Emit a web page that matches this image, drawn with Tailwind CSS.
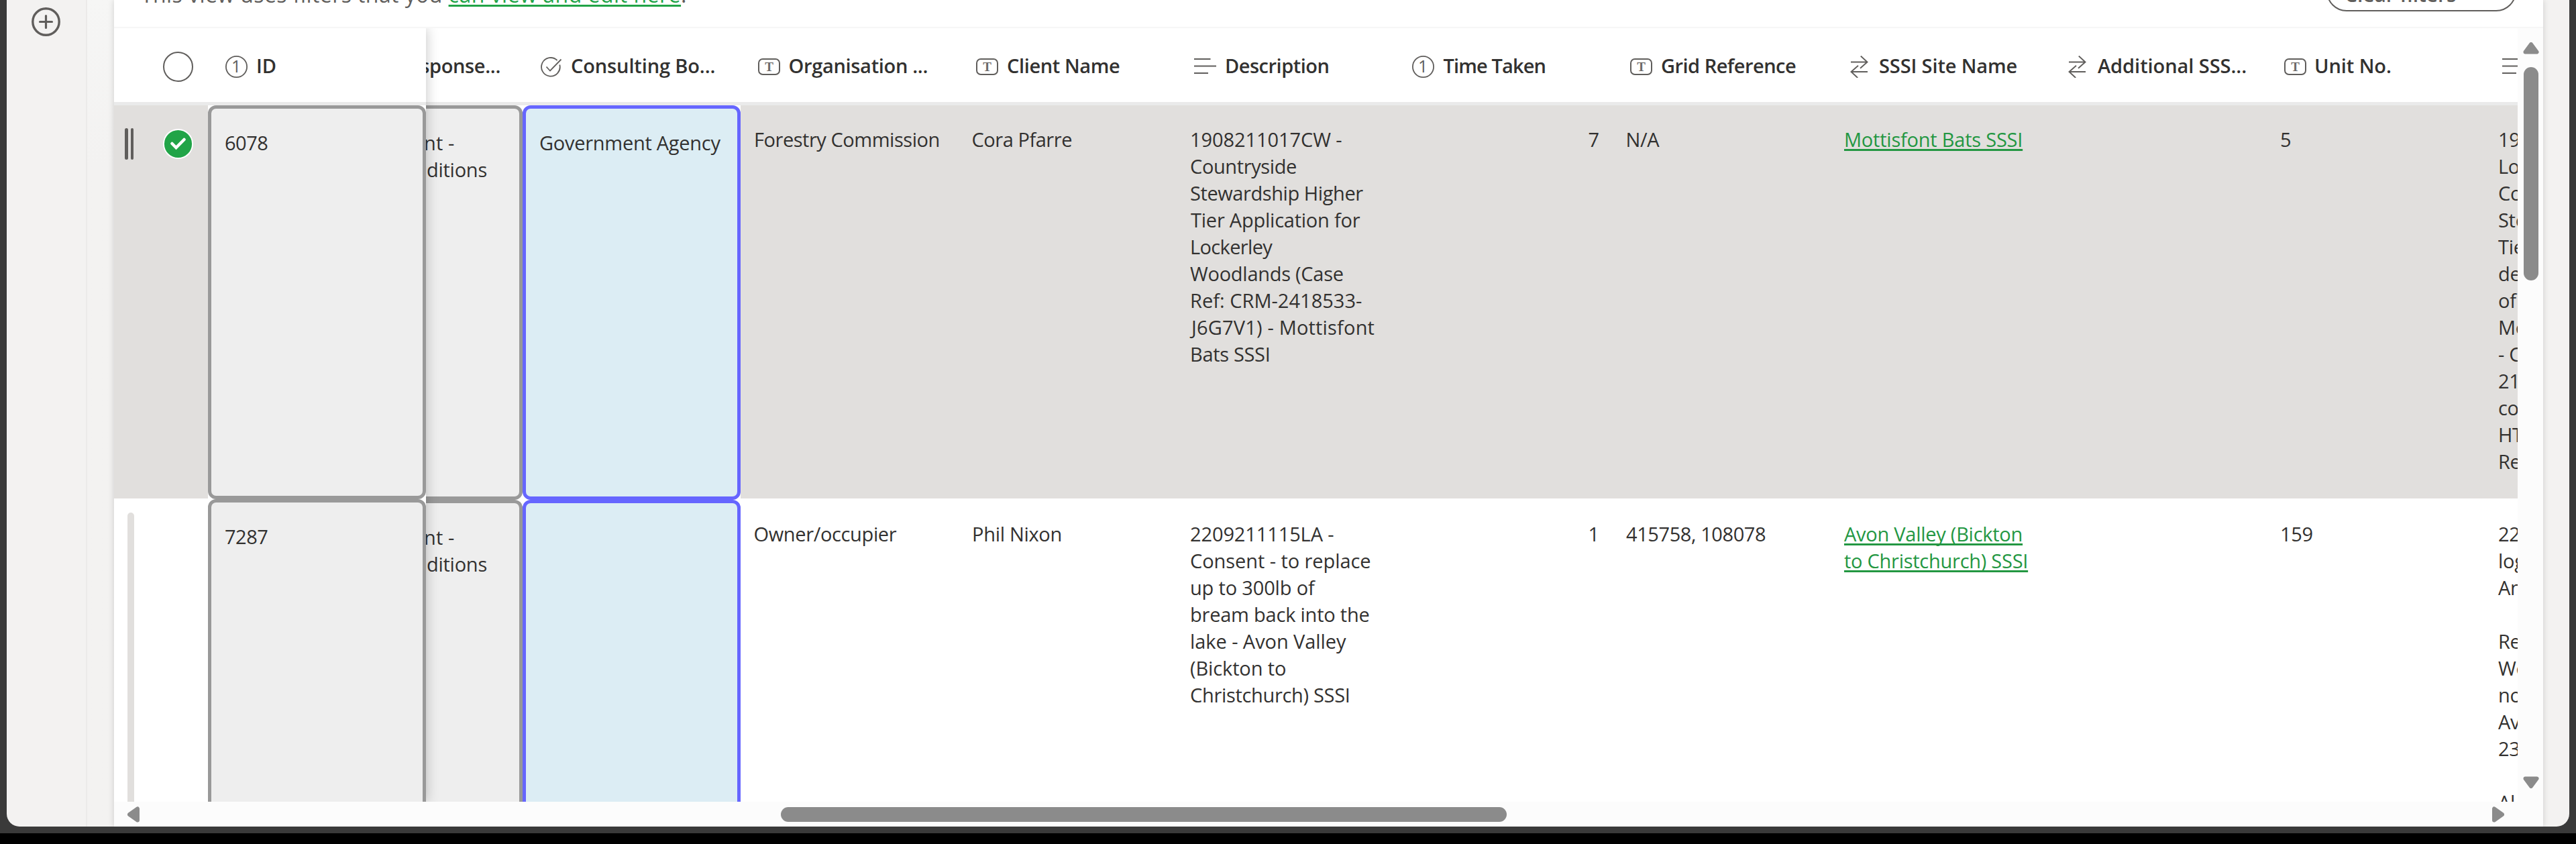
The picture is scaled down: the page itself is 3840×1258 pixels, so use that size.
<!DOCTYPE html>
<html lang="en">
<head>
<meta charset="utf-8">
<title>Consultations</title>
<script src="https://cdn.jsdelivr.net/npm/@tailwindcss/browser@4"></script>
</head>
<body class="h-[1258px] w-[3840px] overflow-hidden bg-black font-['Open_Sans',sans-serif] text-[29px] leading-10 text-[#323130] whitespace-nowrap">
<svg class="hidden">
  <symbol id="num" viewBox="0 0 33 33"><circle cx="16.5" cy="16.5" r="15.6" fill="none" stroke="#605e5c" stroke-width="1.8"/><text x="16.2" y="25.2" text-anchor="middle" font-size="25" font-weight="400" fill="#605e5c" font-family="Open Sans">1</text></symbol>
  <symbol id="txt" viewBox="0 0 33 33"><rect x="1" y="5" width="31" height="23" rx="6" fill="none" stroke="#605e5c" stroke-width="2"/><text x="16.5" y="22.7" text-anchor="middle" font-size="19" font-weight="700" fill="#6b6967" font-family="Liberation Serif">T</text></symbol>
  <symbol id="chk" viewBox="0 0 33 33"><path d="M24.600 7A13.800 13.800 0 1 0 28.300 13.500" fill="none" stroke="#605e5c" stroke-width="1.8"/><path d="M8.500 16.500l5.500 6L30.500 5.500" fill="none" stroke="#605e5c" stroke-width="1.800"/></symbol>
  <symbol id="par" viewBox="0 0 33 33"><path d="M0 5h24.500M0 15.600h33M0 26h21" stroke="#605e5c" stroke-width="2" fill="none"/></symbol>
  <symbol id="lnk" viewBox="0 0 33 33"><path d="M4 9.500h24M18.800 .5l9.700 9-10.500 9.200M29 24h-24M15 14.800L4.500 24l9.700 9" stroke="#605e5c" stroke-width="1.900" fill="none"/></symbol>
</svg>

<div class="flex h-[1242px] w-full flex-col bg-[#3a3a3a] px-[10px]">
 <div class="flex h-[1232px] overflow-hidden rounded-b-[19px] bg-[#f3f2f1]">

  <!-- navigation rail -->
  <nav class="flex w-[120px] shrink-0 flex-col border-r-2 border-[#ebeae9] pt-[11px] pl-[37px]">
    <svg class="h-[44px] w-[44px]" viewBox="0 0 44 44" fill="none" stroke="#605e5c" stroke-linecap="round"><circle cx="21.500" cy="21.500" r="19.700" stroke-width="3.400"/><path d="M21.500 12.500v18M12.500 21.500h18" stroke-width="3.200"/></svg>
  </nav>
  <div class="w-10 shrink-0 bg-linear-to-b from-[#f6f6f5] to-[#f3f2f1] to-20%"></div>

  <main class="flex w-[3621px] shrink-0 flex-col bg-white shadow-[0_0_9px_rgba(0,0,0,0.16)]">
    <!-- filter notice -->
    <div class="flex h-[42px] shrink-0 items-start justify-between overflow-hidden border-b-2 border-[#f6f6f6] pr-[40px] pl-[40px] text-[#605e5c]">
      <p class="-mt-[28px] text-[32px] leading-10 tracking-[0.42px]">This view uses filters that you <a class="tracking-[0.5px] text-[#21a447] underline decoration-[3px] underline-offset-[3px] [text-decoration-skip-ink:none]">can view and edit here</a>.</p>
      <div class="-mt-[43px] flex h-[60px] w-[283px] shrink-0 items-center rounded-[30px] border-2 border-[#605e5c] pl-[25px] text-[30px] font-semibold"><span class="mt-[10px] tracking-[-0.05px]">Clear filters</span></div>
    </div>

    <div class="flex h-[1153px] shrink-0">
     <div class="relative flex w-[3583px] shrink-0 overflow-hidden">

      <!-- frozen columns -->
      <div class="z-10 w-[465px] shrink-0 shadow-[0_0_18px_rgba(0,0,0,0.24)]">
        <div class="flex h-[115px] items-center border-b-[5px] border-[#eaeaea] bg-white pt-0.5 font-semibold">
          <span class="mt-[3px] ml-[73px] h-[45px] w-[45px] rounded-full border-2 border-[#605e5c]"></span>
          <svg class="mt-[3px] ml-[48px] h-[33px] w-[33px]"><use href="#num"/></svg>
          <span class="ml-[13px]">ID</span>
        </div>
        <div class="flex h-[587px] bg-white">
          <div class="flex h-[586px] w-[140px] items-start bg-[#e1dfdd]">
            <div class="mt-[34px] ml-4 flex h-[47px] gap-[4px]"><i class="w-[4.5px] rounded-full bg-[#605e5c]"></i><i class="w-[4.5px] rounded-full bg-[#605e5c]"></i></div>
            <svg class="mt-[35px] ml-[44px] h-[45px] w-[45px]" viewBox="0 0 45 45"><circle cx="22.500" cy="22.500" r="22.500" fill="#fff"/><circle cx="22.500" cy="22.500" r="20.600" fill="#21a447"/><path d="M13.500 22l6 6L31.500 16" fill="none" stroke="#fff" stroke-width="4.500" stroke-linecap="round"/></svg>
          </div>
          <div class="w-[325px] rounded-xl border-[5px] border-[#999] bg-[#eee] pt-[31px] pl-5 tracking-[-0.5px]">6078</div>
        </div>
        <div class="flex h-[600px] bg-white">
          <div class="w-[140px] pt-5"><div class="ml-5 h-full w-[10px] rounded-full bg-[#e1dfdd]"></div></div>
          <div class="w-[325px] rounded-xl border-[5px] border-[#999] bg-[#eee] pt-[31px] pl-5 tracking-[-0.5px]">7287</div>
        </div>
      </div>

      <!-- scrolling columns -->
      <div class="w-[3118px] shrink-0">
        <div class="flex h-[115px] border-b-[5px] border-[#eaeaea] bg-white pt-0.5 font-semibold">
          <div class="flex w-[144px] shrink-0 items-center justify-end overflow-hidden pr-[33px] tracking-[-0.35px]">sponse...</div>
          <div class="flex w-[325px] shrink-0 items-center pl-[27px]"><svg class="mt-[3px] h-[33px] w-[33px]"><use href="#chk"/></svg><span class="ml-[12px] tracking-[-0.13px]">Consulting Bo...</span></div>
          <div class="flex w-[325px] shrink-0 items-center pl-[26px]"><svg class="mt-[3px] h-[33px] w-[33px]"><use href="#txt"/></svg><span class="ml-[12.500px] tracking-[-0.32px]">Organisation ...</span></div>
          <div class="flex w-[325px] shrink-0 items-center pl-[26px]"><svg class="mt-[3px] h-[33px] w-[33px]"><use href="#txt"/></svg><span class="ml-[13px] tracking-[-0.39px]">Client Name</span></div>
          <div class="flex w-[325px] shrink-0 items-center pl-[26px]"><svg class="mt-[3px] h-[33px] w-[33px]"><use href="#par"/></svg><span class="ml-[13px] tracking-[-0.49px]">Description</span></div>
          <div class="flex w-[325px] shrink-0 items-center pl-[26px]"><svg class="mt-[3px] h-[33px] w-[33px]"><use href="#num"/></svg><span class="ml-[13.500px] tracking-[-0.88px]">Time Taken</span></div>
          <div class="flex w-[325px] shrink-0 items-center pl-[26px]"><svg class="mt-[3px] h-[33px] w-[33px]"><use href="#txt"/></svg><span class="ml-[13px] tracking-[-0.52px]">Grid Reference</span></div>
          <div class="flex w-[325px] shrink-0 items-center pl-[26px]"><svg class="mt-[3px] h-[33px] w-[33px]"><use href="#lnk"/></svg><span class="ml-[13px] tracking-[-0.12px]">SSSI Site Name</span></div>
          <div class="flex w-[325px] shrink-0 items-center pl-[26px]"><svg class="mt-[3px] h-[33px] w-[33px]"><use href="#lnk"/></svg><span class="ml-[14px] tracking-[-0.06px]">Additional SSS...</span></div>
          <div class="flex w-[325px] shrink-0 items-center pl-[26px]"><svg class="mt-[3px] h-[33px] w-[33px]"><use href="#txt"/></svg><span class="ml-[12px] tracking-[-0.07px]">Unit No.</span></div>
          <div class="flex w-[49px] shrink-0 items-center overflow-hidden pl-[26px]"><svg class="mt-[3px] h-[33px] w-[33px] shrink-0"><use href="#par"/></svg></div>
        </div>

        <!-- row 6078 -->
        <div class="flex h-[588px] bg-white">
          <div class="flex w-[144px] shrink-0 flex-col items-end overflow-hidden rounded-r-xl border-y-[5px] border-r-[5px] border-[#999] bg-[#eee] pt-[31px]"><span class="mr-[96.500px] tracking-[0.1px]">nt -</span><span class="mr-[48px] tracking-[-0.24px]">ditions</span></div>
          <div class="w-[325px] shrink-0 rounded-xl border-[5px] border-[#6666ff] bg-[#dcedf4] pt-[31px] pl-5 tracking-[-0.27px]">Government Agency</div>
          <div class="flex h-[586px] w-[2649px] overflow-hidden bg-[#e1dfdd] pt-[31px]">
            <div class="w-[325px] shrink-0 pl-5 tracking-[-0.46px]">Forestry Commission</div>
            <div class="w-[325px] shrink-0 pl-[19.500px] tracking-[-0.46px]">Cora Pfarre</div>
            <div class="flex w-[325px] shrink-0 flex-col pl-5">
              <span class="tracking-[-0.08px]">1908211017CW -</span><span class="tracking-[-0.39px]">Countryside</span><span class="tracking-[-0.42px]">Stewardship Higher</span><span class="pl-px tracking-[-0.23px]">Tier Application for</span><span class="tracking-[-0.64px]">Lockerley</span><span class="tracking-[-0.27px]">Woodlands (Case</span><span class="tracking-[0.02px]">Ref: CRM-2418533-</span><span class="pl-0.5 tracking-[0.18px]">J6G7V1) - Mottisfont</span><span class="tracking-[-0.32px]">Bats SSSI</span>
            </div>
            <div class="w-[325px] shrink-0 pr-5 text-right">7</div>
            <div class="w-[325px] shrink-0 pl-[19.500px] tracking-[-0.3px]">N/A</div>
            <div class="w-[325px] shrink-0 pl-5 text-[#239742]"><a class="tracking-[-0.22px] underline decoration-[3px] underline-offset-[3px] [text-decoration-skip-ink:none]">Mottisfont Bats SSSI</a></div>
            <div class="w-[325px] shrink-0"></div>
            <div class="w-[325px] shrink-0 pl-5">5</div>
            <div class="flex w-[49px] shrink-0 flex-col overflow-hidden pl-5 tracking-[-0.3px]"><span>19</span><span>Loc</span><span>Cou</span><span>Stew</span><span>Tier</span><span>dec</span><span>of</span><span>Mot</span><span>- CR</span><span>21</span><span>con</span><span>HT</span><span>Ref</span></div>
          </div>
        </div>

        <!-- row 7287 -->
        <div class="flex h-[600px] bg-white">
          <div class="flex w-[144px] shrink-0 flex-col items-end overflow-hidden rounded-tr-xl border-t-[5px] border-r-[5px] border-[#999] bg-[#eee] pt-[31px]"><span class="mr-[96.500px] tracking-[0.1px]">nt -</span><span class="mr-[48px] tracking-[-0.24px]">ditions</span></div>
          <div class="w-[325px] shrink-0 rounded-xl border-[5px] border-[#6666ff] bg-[#dcedf4]"></div>
          <div class="flex w-[2649px] overflow-hidden pt-[31px]">
            <div class="w-[325px] shrink-0 pl-[19.500px] tracking-[-0.36px]">Owner/occupier</div>
            <div class="w-[325px] shrink-0 pl-5 tracking-[-0.3px]">Phil Nixon</div>
            <div class="flex w-[325px] shrink-0 flex-col pl-5">
              <span class="tracking-[-0.12px]">2209211115LA -</span><span class="tracking-[-0.07px]">Consent - to replace</span><span class="tracking-[-0.17px]">up to 300lb of</span><span class="tracking-[-0.22px]">bream back into the</span><span class="tracking-[-0.07px]">lake - Avon Valley</span><span class="tracking-[-0.12px]">(Bickton to</span><span class="tracking-[-0.32px]">Christchurch) SSSI</span>
            </div>
            <div class="w-[325px] shrink-0 pr-5 text-right">1</div>
            <div class="w-[325px] shrink-0 pl-5 tracking-[-0.42px]">415758, 108078</div>
            <div class="w-[325px] shrink-0 pl-5 text-[#239742]"><a class="tracking-[-0.26px] underline decoration-[3px] underline-offset-[3px] [text-decoration-skip-ink:none]">Avon Valley (Bickton<br>to Christchurch) SSSI</a></div>
            <div class="w-[325px] shrink-0"></div>
            <div class="w-[325px] shrink-0 pl-5 tracking-[-0.3px]">159</div>
            <div class="flex w-[49px] shrink-0 flex-col overflow-hidden pl-5 tracking-[-0.3px]"><span>22</span><span>log</span><span>An</span><span>&nbsp;</span><span>Re</span><span>Wo</span><span>no</span><span>Av</span><span>23</span><span>&nbsp;</span><span>Al</span></div>
          </div>
        </div>
      </div>
     </div>

     <!-- vertical scrollbar -->
     <div class="flex w-[38px] flex-col items-center bg-[#fcfcfc] pt-[21px] pb-5 pl-px">
       <svg class="h-[18px] w-[24px]" viewBox="0 0 24 18"><path d="M12 3L20.500 14.500H3.500z" fill="#8b8b8b" stroke="#8b8b8b" stroke-width="6" stroke-linejoin="round"/></svg>
       <div class="mt-[19px] h-[318px] w-[22px] rounded-full bg-[#8b8b8b]"></div>
       <svg class="mt-auto h-[18px] w-[24px]" viewBox="0 0 24 18"><path d="M12 15L20.500 3.500H3.500z" fill="#8b8b8b" stroke="#8b8b8b" stroke-width="6" stroke-linejoin="round"/></svg>
     </div>
    </div>

    <!-- horizontal scrollbar -->
    <div class="flex h-[37px] items-center bg-[#fcfcfc] pr-[58px] pl-5">
      <svg class="h-[24px] w-[18px]" viewBox="0 0 18 24"><path d="M3 12L15 3.500v17z" fill="#8b8b8b" stroke="#8b8b8b" stroke-width="6" stroke-linejoin="round"/></svg>
      <div class="ml-[956px] h-[22px] w-[1082px] rounded-full bg-[#8b8b8b]"></div>
      <svg class="ml-auto h-[24px] w-[18px]" viewBox="0 0 18 24"><path d="M15 12L3 3.500v17z" fill="#8b8b8b" stroke="#8b8b8b" stroke-width="6" stroke-linejoin="round"/></svg>
    </div>
  </main>
 </div>
</div>
</body>
</html>
